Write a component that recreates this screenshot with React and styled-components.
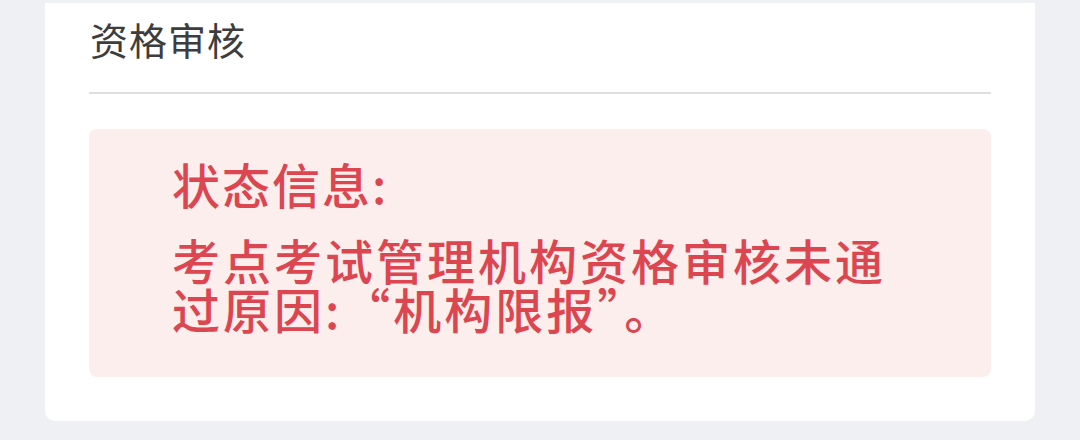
import React from "react";
import styled, { createGlobalStyle } from "styled-components";

const Global = createGlobalStyle`
  html, body { margin: 0; padding: 0; }
  body {
    background: #eef0f4;
    font-family: "Noto Sans CJK SC", "Noto Sans", sans-serif;
    width: 1080px;
    height: 440px;
    overflow: hidden;
  }
`;

const Page = styled.div`
  padding: 3px 45px 0 45px;
`;

const Card = styled.div`
  background: #ffffff;
  border-radius: 0 0 10px 10px;
  padding: 0 44px 44px 44px;
`;

const Title = styled.div`
  font-size: 38px;
  line-height: 40px;
  letter-spacing: 1px;
  color: #3d3d3d;
  padding: 16px 0 33px 1px;
  border-bottom: 2px solid #dedfe3;
`;

const Notice = styled.div`
  margin-top: 35px;
  background: #fdeeee;
  border-radius: 8px;
  padding: 28px 40px 44px 83px;
  color: #dc4650;
  font-weight: 500;
`;

const Heading = styled.div`
  font-size: 48px;
  line-height: 52px;
  letter-spacing: 2px;
`;

const Body = styled.div`
  margin-top: 26px;
  font-size: 48px;
  line-height: 49px;
  letter-spacing: 3px;
`;

export default function App() {
  return (
    <>
      <Global />
      <Page>
        <Card>
          <Title>资格审核</Title>
          <Notice>
            <Heading>状态信息:</Heading>
            <Body>
              考点考试管理机构资格审核未通
              <br />
              过原因:“机构限报”。
            </Body>
          </Notice>
        </Card>
      </Page>
    </>
  );
}
